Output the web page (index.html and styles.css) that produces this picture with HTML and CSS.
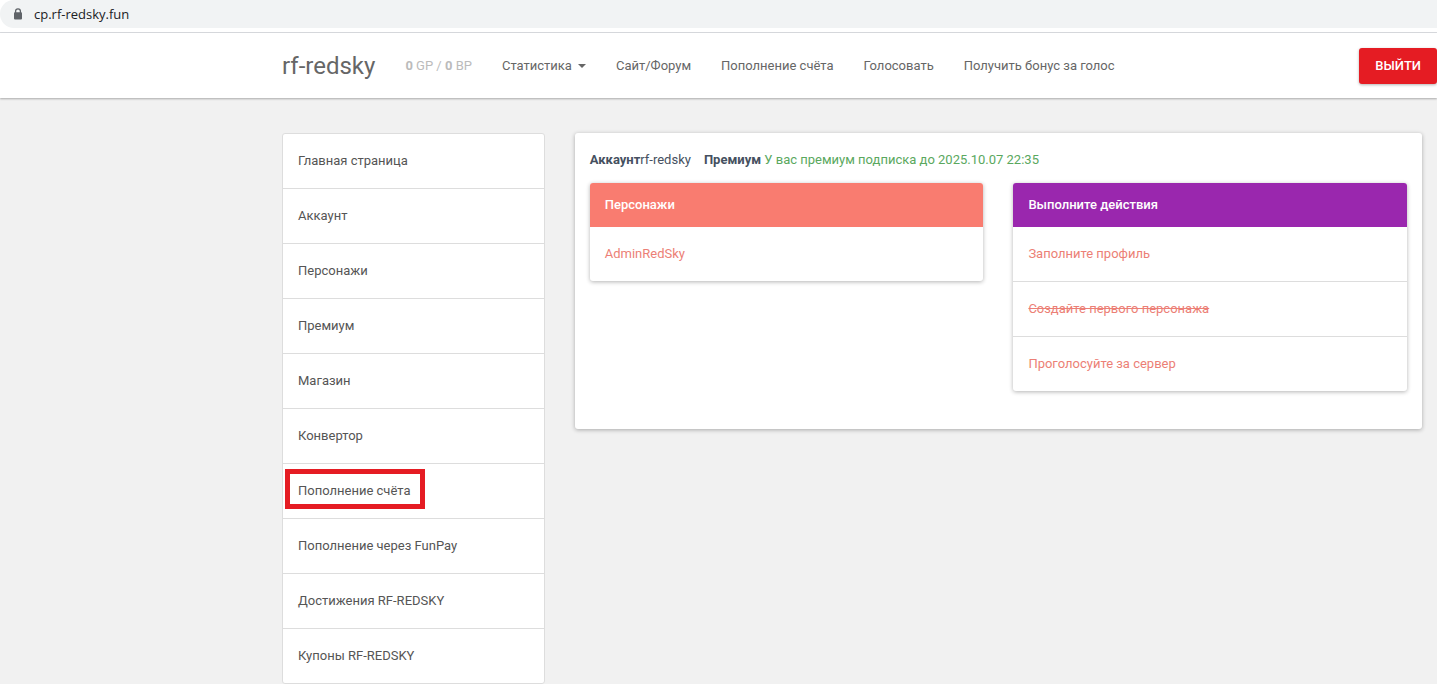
FILE: index.html
```
<!DOCTYPE html>
<html lang="ru">
<head>
<meta charset="utf-8">
<meta name="viewport" content="width=device-width, initial-scale=1">
<title>rf-redsky</title>
<link rel="stylesheet" href="styles.css">
</head>
<body>
<div class="browser-bar">
  <div class="address">
    <svg class="lock" viewBox="0 0 10 12" aria-hidden="true">
      <path d="M2.6 5V3.2a2.4 2.4 0 0 1 4.8 0V5" fill="none" stroke="#5f6368" stroke-width="1.3"/>
      <rect x="1" y="4.3" width="8" height="7.2" rx="1" fill="#5f6368"/>
    </svg>
    <span>cp.rf-redsky.fun</span>
  </div>
</div>
<header class="navbar">
  <a class="brand" href="#">rf-redsky</a>
  <nav class="nav">
    <span class="balance"><b>0</b> GP / <b>0</b> BP</span>
    <a href="#">Статистика<span class="caret"></span></a>
    <a href="#">Сайт/Форум</a>
    <a href="#">Пополнение счёта</a>
    <a href="#">Голосовать</a>
    <a href="#">Получить бонус за голос</a>
  </nav>
  <button class="logout" type="button">Выйти</button>
</header>
<main class="layout">
  <nav class="sidebar">
    <a href="#">Главная страница</a>
    <a href="#">Аккаунт</a>
    <a href="#">Персонажи</a>
    <a href="#">Премиум</a>
    <a href="#">Магазин</a>
    <a href="#">Конвертор</a>
    <a href="#"><span class="marked">Пополнение счёта</span></a>
    <a href="#">Пополнение через FunPay</a>
    <a href="#">Достижения RF-REDSKY</a>
    <a href="#">Купоны RF-REDSKY</a>
  </nav>
  <section class="content">
    <div class="status">
      <span><b>Аккаунт</b>rf-redsky</span>
      <span><b>Премиум</b> <span class="active">У вас премиум подписка до 2025.10.07 22:35</span></span>
    </div>
    <div class="panels">
      <section class="panel">
        <h2 class="panel-title coral">Персонажи</h2>
        <a href="#">AdminRedSky</a>
      </section>
      <section class="panel">
        <h2 class="panel-title purple">Выполните действия</h2>
        <a href="#">Заполните профиль</a>
        <a class="done" href="#">Создайте первого персонажа</a>
        <a href="#">Проголосуйте за сервер</a>
      </section>
    </div>
  </section>
</main>
</body>
</html>
```
FILE: styles.css
```
* { box-sizing: border-box; }
body {
  margin: 0;
  background: #f1f1f1;
  color: #455060;
  font: 13px/22px Roboto, sans-serif;
}
a { text-decoration: none; }
b { font-weight: 700; }

.browser-bar {
  padding-bottom: 4px;
  background: #fff;
  border-bottom: 1px solid #dadce0;
}
.address {
  display: flex;
  align-items: center;
  gap: 11px;
  height: 28px;
  padding-left: 13px;
  background: #f1f3f4;
  border-radius: 14px 0 0 14px;
  color: #202124;
  font: 13px/20px "Open Sans", sans-serif;
}
.lock { width: 10px; height: 12px; }

.navbar {
  display: flex;
  align-items: center;
  height: 65px;
  padding-left: 282px;
  background: #fff;
  box-shadow: 0 1px 2px rgba(0, 0, 0, .3);
}
.brand { margin-right: 30px; color: #666; font-size: 24px; }
.nav { display: flex; gap: 30px; white-space: nowrap; }
.nav a { color: #666; }
.balance { color: #bbb; }
.caret {
  display: inline-block;
  margin-left: 6px;
  border: 4px solid transparent;
  border-top-color: #666;
  border-bottom: 0;
  vertical-align: middle;
}
.logout {
  margin-left: auto;
  height: 36px;
  padding: 0 16px;
  border: 0;
  border-radius: 3px;
  background: #e51c23;
  box-shadow: 0 1px 3px rgba(0, 0, 0, .3);
  color: #fff;
  font: 500 13px/22px Roboto, sans-serif;
  text-transform: uppercase;
}

.layout {
  display: grid;
  grid-template-columns: minmax(0, 263fr) minmax(0, 848fr);
  align-items: start;
  gap: 30px;
  padding: 35px 15px 0 282px;
}
.sidebar {
  background: #fff;
  border: 1px solid #ddd;
  border-radius: 3px;
}
.sidebar a {
  display: block;
  padding: 16px 15px;
  color: #555;
}
.sidebar a + a { border-top: 1px solid #ddd; }
.marked { position: relative; }
.marked::after {
  content: "";
  position: absolute;
  inset: -14px -15px -11px -13px;
  border: 5px solid #e51c23;
}

.content {
  padding: 16px 15px 38px;
  background: #fff;
  border-radius: 3px;
  box-shadow: 0 1px 4px rgba(0, 0, 0, .3);
}
.status { display: flex; gap: 13px; padding-bottom: 12px; }
.active { color: #5aa85e; }
.panels {
  display: grid;
  grid-template-columns: 1fr 1fr;
  align-items: start;
  gap: 30px;
}
.panel {
  overflow: hidden;
  background: #fff;
  border-radius: 3px;
  box-shadow: 0 1px 4px rgba(0, 0, 0, .3);
}
.panel-title {
  margin: 0;
  padding: 11px 15px;
  color: #fff;
  font-size: 13px;
  font-weight: 500;
}
.coral { background: #f97c70; }
.purple { background: #9a27ae; }
.panel a { display: block; padding: 16px 15px; color: #ec7f76; }
.panel a + a { border-top: 1px solid #ddd; }
.panel .done { text-decoration: line-through; }
```
